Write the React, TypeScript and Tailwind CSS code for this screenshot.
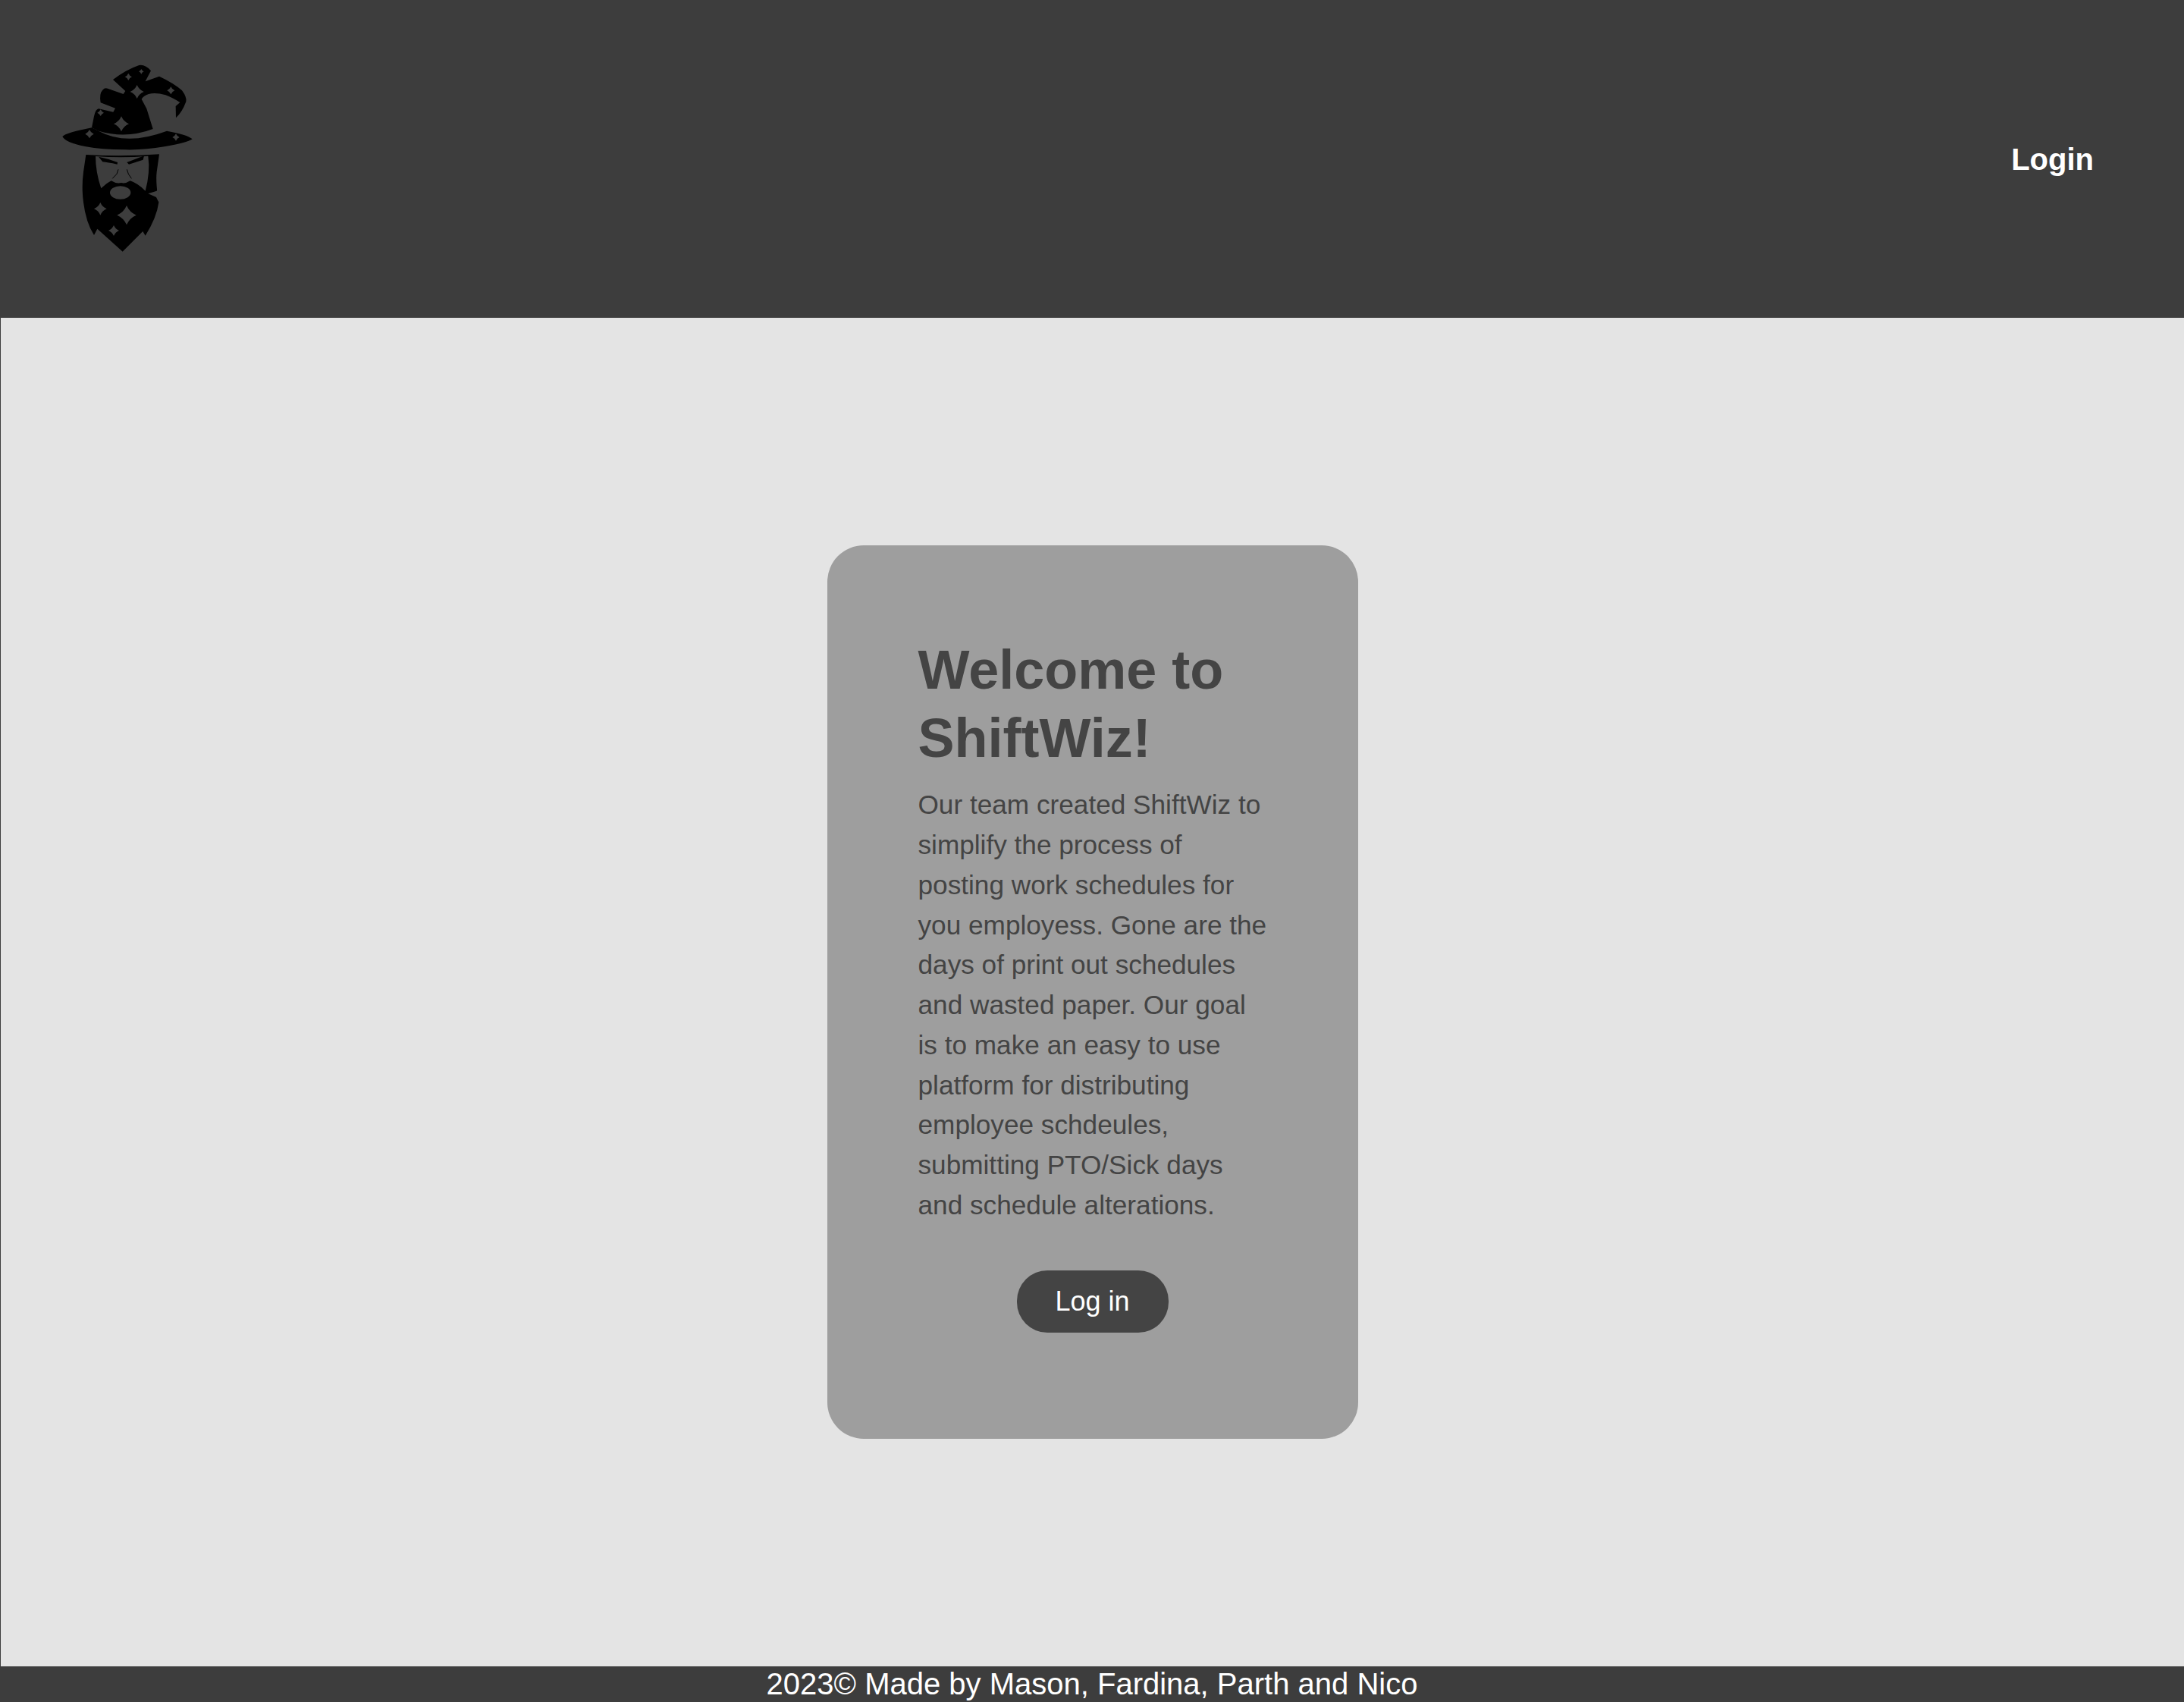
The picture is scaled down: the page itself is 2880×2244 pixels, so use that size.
const BG = '#3d3d3d';

const STARS: [number, number, number][] = [
  [358, 124, 14],
  [409, 103, 10],
  [392, 183, 27],
  [526, 178, 15],
  [248, 266, 13],
  [330, 310, 30],
  [204, 350, 17],
  [546, 363, 14],
  [247, 646, 25],
  [351, 671, 38],
  [300, 732, 21],
];

function star(cx: number, cy: number, r: number) {
  const c = r * 0.3;
  return `M${cx} ${cy - r}Q${cx + c} ${cy - c} ${cx + r} ${cy}Q${cx + c} ${cy + c} ${cx} ${cy + r}Q${cx - c} ${cy + c} ${cx - r} ${cy}Q${cx - c} ${cy - c} ${cx} ${cy - r}Z`;
}

function WizardLogo() {
  return (
    <svg viewBox="0 0 690 900" className="w-[230px] h-[300px]">
      {/* hat */}
      <path
        fill="#000"
        d="M213 325L222 280Q228 252 240 250L298 263L306 248L248 226Q242 190 256 176Q264 166 276 170L338 192L346 180L297 135Q350 95 400 78Q425 74 447 100L425 142L480 122Q540 150 570 178Q590 205 586 222Q570 265 546 286L545 240L562 225Q530 205 505 196Q465 184 438 192Q418 198 410 212L430 250L455 330Q350 370 240 338Z"
      />
      {/* brim */}
      <path
        fill="#000"
        d="M97 360Q110 345 213 325L240 338Q350 398 510 338Q590 352 611 370Q590 385 500 400Q420 414 345 412Q250 412 190 400Q110 385 97 360Z"
      />
      {/* beard and face */}
      <path
        fill="#000"
        d="M190 432Q335 440 480 430L470 500Q465 540 478 620Q470 680 425 752L415 735L335 815L235 725L222 750Q190 700 180 620Q172 560 180 500Z"
      />
      <path
        fill={BG}
        d="M228 438Q335 446 436 437Q445 500 425 575Q395 545 365 535Q345 548 330 543Q310 548 290 535Q270 545 250 565Q228 500 228 438Z"
      />
      <path
        fill="#000"
        d="M240 440Q280 448 315 462L314 470Q275 462 256 460ZM352 462Q385 450 420 436L416 452Q385 462 360 470Z"
      />
      <path
        fill="none"
        stroke="#000"
        strokeWidth="3"
        d="M318 490L312 508L295 526M352 490L358 508L370 526"
      />
      <ellipse cx="326" cy="582" rx="41" ry="26" fill={BG} />
      <path fill={BG} d="M478 560L470 575L436 586L468 600L478 620Z" />
      {STARS.map(([x, y, r]) => (
        <path key={`${x}-${y}`} d={star(x, y, r)} fill={BG} />
      ))}
    </svg>
  );
}

export default function App() {
  return (
    <div className="font-['Liberation_Sans',Arial,sans-serif] min-h-[2244px] flex flex-col bg-[#e4e4e4]">
      <header className="h-[419px] bg-[#3d3d3d] flex items-center justify-between pl-[50px] pr-[119px]">
        <WizardLogo />
        <a className="text-[40px] font-bold text-white">Login</a>
      </header>

      <main className="flex-1 flex items-center justify-center border-l border-[#3d3d3d]">
        <div className="w-[700px] bg-[#9e9e9e] rounded-[48px] pt-[119px] px-[120px] pb-[140px] flex flex-col text-[#444444]">
          <h1 className="text-[72px] leading-[90px] font-bold">Welcome to ShiftWiz!</h1>
          <p className="mt-[17px] text-[35.2px] leading-[52.8px]">
            Our team created ShiftWiz to simplify the process of posting work schedules for you
            employess. Gone are the days of print out schedules and wasted paper. Our goal is to
            make an easy to use platform for distributing employee schdeules, submitting PTO/Sick
            days and schedule alterations.
          </p>
          <button className="mt-[59px] self-center w-[200px] h-[82px] rounded-[40px] bg-[#444444] text-white text-[36px]">
            Log in
          </button>
        </div>
      </main>

      <footer className="h-[47px] bg-[#3d3d3d] text-white text-[40px] leading-[47px] text-center">
        2023© Made by Mason, Fardina, Parth and Nico
      </footer>
    </div>
  );
}
